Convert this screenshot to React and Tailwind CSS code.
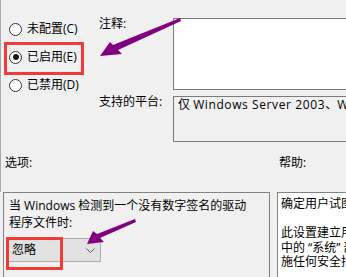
import React from 'react'

const font = { fontFamily: '"Open Sans", "Noto Sans CJK SC", sans-serif' }

const Radio = ({ label, checked }) => (
  <div className="h-[28px] flex items-center gap-[5px]">
    <span className="w-[13px] h-[13px] rounded-full border border-[#333333] bg-white flex items-center justify-center shrink-0">
      {checked && <span className="w-[6px] h-[6px] rounded-full bg-[#1a1a1a]" />}
    </span>
    <span className="text-[12px] leading-[16px] text-black">{label}</span>
  </div>
)

const App = () => {
  return (
    <div className="w-[346px] h-[277px] bg-[#f0f0f0] relative overflow-hidden text-[12px] text-black" style={font}>
      <div className="h-[192px] border-l border-[#a8a8a8]">
        <div className="flex h-[142px]">
          <div className="w-[98px] shrink-0 pt-[15px] pl-[8px]">
            <Radio label="未配置(C)" />
            <Radio label="已启用(E)" checked />
            <Radio label="已禁用(D)" />
          </div>
          <div className="flex flex-col">
            <div className="flex">
              <div className="w-[74px] shrink-0 pt-[16px] leading-[16px]">注释:</div>
              <div className="mt-[18px] w-[190px] h-[72px] shrink-0 border border-[#7a7a7a] bg-white" />
            </div>
            <div className="flex mt-[6px]">
              <div className="w-[74px] shrink-0 leading-[12px]">支持的平台:</div>
              <div className="w-[190px] h-[46px] shrink-0 border border-[#7a7a7a] pl-[4px] leading-[16px] whitespace-nowrap overflow-hidden">
                仅 <span className="tracking-[0.6px]">Windows Server 2003</span>、Windows XP
              </div>
            </div>
          </div>
        </div>
        <div className="flex mt-[13px] leading-[16px]">
          <div className="w-[278px] shrink-0 pl-[4px]">选项:</div>
          <div>帮助:</div>
        </div>
      </div>

      <div className="flex pl-[3px] gap-[7px]">
        <div className="w-[267px] h-[100px] shrink-0 border border-[#828282] pt-[4px]">
          <div className="ml-[5px] leading-[17px] whitespace-nowrap">
            当 Windows 检测到一个没有数字签名的驱动
            <br />
            程序文件时:
          </div>
          <div className="mt-[7px] ml-[3px] w-[94px] h-[24px] bg-[#e1e1e1] border border-[#adadad] flex items-center justify-between pl-[4px] pr-[4px]">
            <span className="leading-[16px]">忽略</span>
            <svg width="9" height="5" viewBox="0 0 9 5" className="mr-[1px]">
              <polyline points="0.5,0.5 4.5,4.5 8.5,0.5" fill="none" stroke="#606060" strokeWidth="1" />
            </svg>
          </div>
        </div>
        <div className="w-[90px] h-[100px] shrink-0 border border-[#828282] bg-white pt-[4px] pl-[3px] leading-[14.5px] whitespace-nowrap overflow-hidden">
          确定用户试图安装没有数字签名的设备驱动程序时
          <br />
          <br />
          此设置建立用户计算机上最低限度的响应
          <br />
          中的 “系统” 部分
          <br />
          施任何安全措施
        </div>
      </div>

      <div className="absolute left-[4px] top-[42px] w-[80px] h-[33px] border-[3px] border-[#f03b3b]" />
      <div className="absolute left-[6px] top-[237px] w-[57px] h-[33px] border-[3px] border-[#f03b3b]" />

      <svg className="absolute left-0 top-0" width="346" height="277" viewBox="0 0 346 277">
        <polygon points="100,56 110,42 113,45 180,18 181,21 118,50 122,54" fill="#800080" />
        <polygon points="87,244 93,231 97,234 135,219 136,222 100,238 104,242" fill="#800080" />
      </svg>
    </div>
  )
}

export default App
